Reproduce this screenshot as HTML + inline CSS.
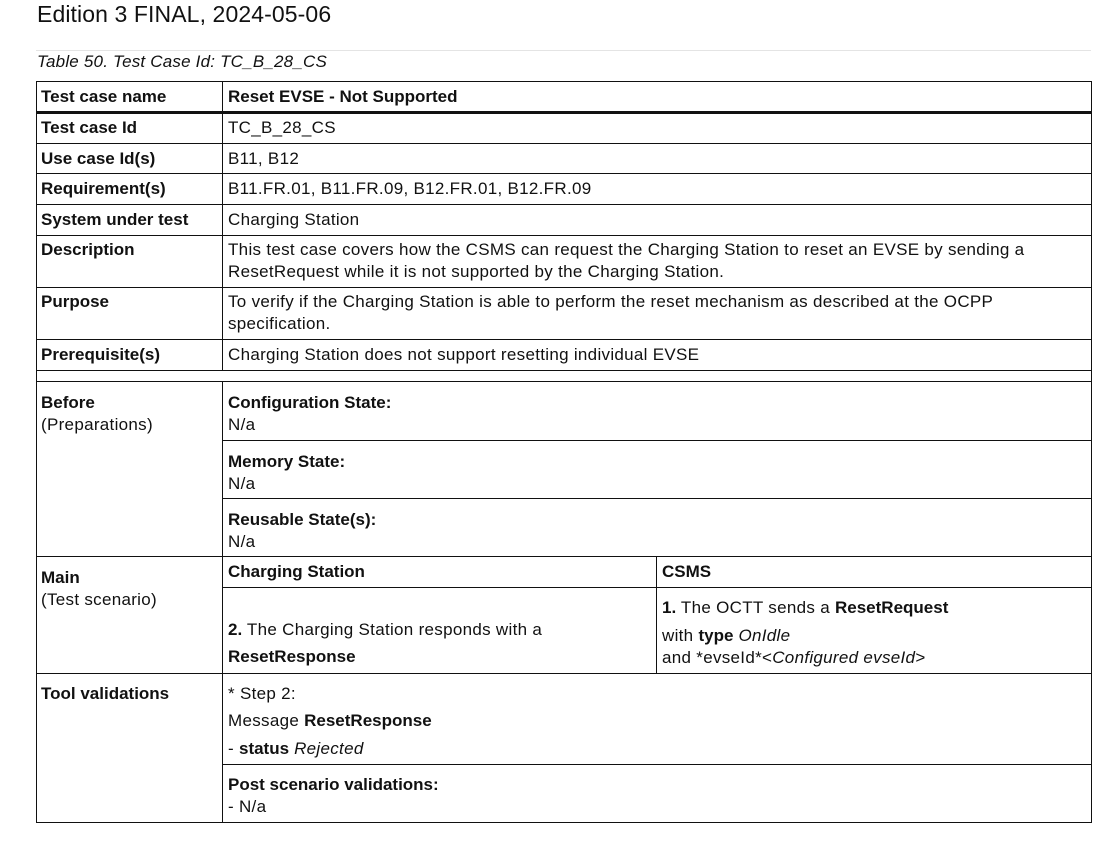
<!DOCTYPE html>
<html><head><meta charset="utf-8"><style>
body{margin:0;width:1116px;height:859px;background:#fff;position:relative;overflow:hidden;font-family:"Liberation Sans",Arial,sans-serif;color:#111;}
.t{position:absolute;font-size:17px;line-height:22px;white-space:nowrap;letter-spacing:0.3px;margin-top:2px}
.h{position:absolute;background:#111;height:1px}
.v{position:absolute;background:#111;width:1px}
b{font-weight:bold;letter-spacing:0}
</style></head><body>
<div class="t" style="left:37px;top:-2px;font-size:23px;line-height:28px;letter-spacing:0.1px">Edition 3 FINAL, 2024-05-06</div>
<div style="position:absolute;left:36px;top:50px;width:1055px;height:1px;background:#e4e4e4"></div>
<div class="t" style="left:37px;top:49px;font-style:italic;letter-spacing:0.2px">Table 50. Test Case Id: TC_B_28_CS</div>

<div class="h" style="left:36px;top:81px;width:1056px"></div>
<div class="h" style="left:36px;top:111px;width:1056px;height:3px"></div>
<div class="h" style="left:36px;top:143px;width:1056px"></div>
<div class="h" style="left:36px;top:173px;width:1056px"></div>
<div class="h" style="left:36px;top:204px;width:1056px"></div>
<div class="h" style="left:36px;top:235px;width:1056px"></div>
<div class="h" style="left:36px;top:287px;width:1056px"></div>
<div class="h" style="left:36px;top:339px;width:1056px"></div>
<div class="h" style="left:36px;top:370px;width:1056px"></div>
<div class="h" style="left:36px;top:381px;width:1056px"></div>
<div class="h" style="left:222px;top:440px;width:870px"></div>
<div class="h" style="left:222px;top:498px;width:870px"></div>
<div class="h" style="left:36px;top:556px;width:1056px"></div>
<div class="h" style="left:222px;top:587px;width:870px"></div>
<div class="h" style="left:36px;top:673px;width:1056px"></div>
<div class="h" style="left:222px;top:764px;width:870px"></div>
<div class="h" style="left:36px;top:822px;width:1056px"></div>

<div class="v" style="left:36px;top:81px;height:742px"></div>
<div class="v" style="left:1091px;top:81px;height:742px"></div>
<div class="v" style="left:222px;top:81px;height:289px"></div>
<div class="v" style="left:222px;top:381px;height:442px"></div>
<div class="v" style="left:656px;top:556px;height:117px"></div>

<div class="t" style="left:41px;top:84px"><b>Test case name</b></div>
<div class="t" style="left:228px;top:84px"><b>Reset EVSE - Not Supported</b></div>
<div class="t" style="left:41px;top:115px"><b>Test case Id</b></div>
<div class="t" style="left:228px;top:115px">TC_B_28_CS</div>
<div class="t" style="left:41px;top:146px"><b>Use case Id(s)</b></div>
<div class="t" style="left:228px;top:146px">B11, B12</div>
<div class="t" style="left:41px;top:176px"><b>Requirement(s)</b></div>
<div class="t" style="left:228px;top:176px">B11.FR.01, B11.FR.09, B12.FR.01, B12.FR.09</div>
<div class="t" style="left:41px;top:207px"><b>System under test</b></div>
<div class="t" style="left:228px;top:207px">Charging Station</div>
<div class="t" style="left:41px;top:237px"><b>Description</b></div>
<div class="t" style="left:228px;top:237px">This test case covers how the CSMS can request the Charging Station to reset an EVSE by sending a<br>ResetRequest while it is not supported by the Charging Station.</div>
<div class="t" style="left:41px;top:289px"><b>Purpose</b></div>
<div class="t" style="left:228px;top:289px">To verify if the Charging Station is able to perform the reset mechanism as described at the OCPP<br>specification.</div>
<div class="t" style="left:41px;top:342px"><b>Prerequisite(s)</b></div>
<div class="t" style="left:228px;top:342px">Charging Station does not support resetting individual EVSE</div>

<div class="t" style="left:41px;top:390px"><b>Before</b><br>(Preparations)</div>
<div class="t" style="left:228px;top:390px"><b>Configuration State:</b><br>N/a</div>
<div class="t" style="left:228px;top:449px"><b>Memory State:</b><br>N/a</div>
<div class="t" style="left:228px;top:507px"><b>Reusable State(s):</b><br>N/a</div>

<div class="t" style="left:41px;top:565px"><b>Main</b><br>(Test scenario)</div>
<div class="t" style="left:228px;top:559px"><b>Charging Station</b></div>
<div class="t" style="left:662px;top:559px"><b>CSMS</b></div>
<div class="t" style="left:228px;top:617px"><b>2.</b> The Charging Station responds with a</div>
<div class="t" style="left:228px;top:644px"><b>ResetResponse</b></div>
<div class="t" style="left:662px;top:595px"><b>1.</b> The OCTT sends a <b>ResetRequest</b></div>
<div class="t" style="left:662px;top:623px">with <b>type</b> <i>OnIdle</i></div>
<div class="t" style="left:662px;top:645px">and *evseId*&lt;<i>Configured evseId</i>&gt;</div>

<div class="t" style="left:41px;top:681px"><b>Tool validations</b></div>
<div class="t" style="left:228px;top:681px">* Step 2:</div>
<div class="t" style="left:228px;top:708px">Message <b>ResetResponse</b></div>
<div class="t" style="left:228px;top:736px">- <b>status</b> <i>Rejected</i></div>
<div class="t" style="left:228px;top:772px"><b>Post scenario validations:</b><br>- N/a</div>
</body></html>
